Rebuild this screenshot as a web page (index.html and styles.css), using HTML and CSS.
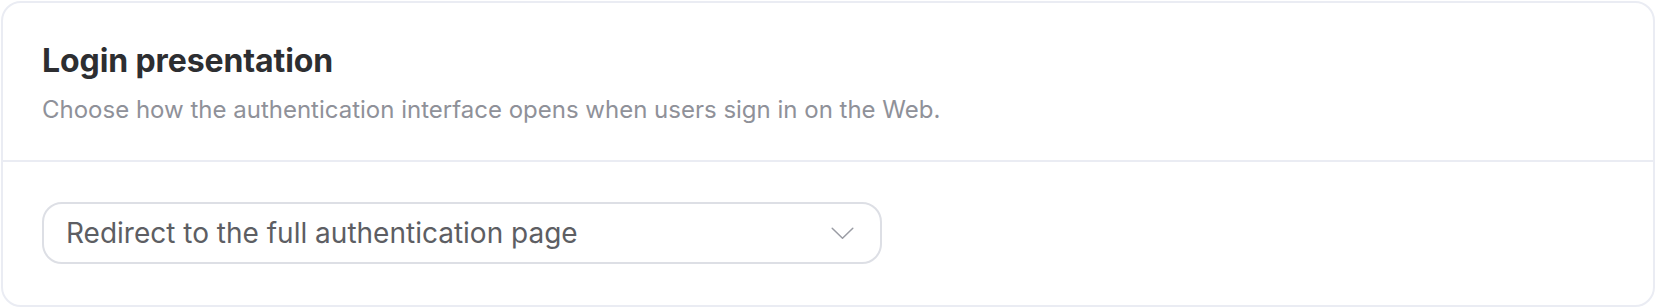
FILE: index.html
```html
<!DOCTYPE html>
<html lang="en">
<head>
<meta charset="utf-8">
<link rel="stylesheet" href="styles.css">
</head>
<body>
<section class="card">
  <header class="card-head">
    <h2 class="title">Login presentation</h2>
    <p class="desc">Choose how the authentication interface opens when users sign in on the Web.</p>
  </header>
  <div class="card-body">
    <div class="select">
      <span class="select-value">Redirect to the full authentication page</span>
      <svg class="chev" width="23" height="13" viewBox="0 0 23 13" fill="none">
        <path d="M1.2 1.2 L11.5 11.2 L21.8 1.2" stroke="#9a9ca4" stroke-width="1.5" stroke-linecap="round" stroke-linejoin="round"/>
      </svg>
    </div>
  </div>
</section>
</body>
</html>
```

FILE: styles.css
```css
* { box-sizing: border-box; }
html, body { margin: 0; padding: 0; background: #ffffff; }
body {
  padding: 1px;
  font-family: Inter, "Noto Sans", sans-serif;
}
.card {
  width: 1654px;
  height: 306px;
  border: 2px solid #eaecf3;
  border-radius: 20px;
  background: #fff;
  display: flex;
  flex-direction: column;
}
.card-head {
  padding: 40px 40px 0 39px;
  height: 159px;
  border-bottom: 2px solid #eaecf3;
}
.title {
  margin: 0;
  font-size: 32px;
  line-height: 36px;
  font-weight: 700;
  color: #2d2e31;
  letter-spacing: -0.1px;
}
.desc {
  margin: 15px 0 0 0;
  font-size: 24px;
  line-height: 32px;
  font-weight: 400;
  color: #8f9199;
}
.card-body {
  padding: 40px 40px 40px 39px;
}
.select {
  width: 840px;
  height: 62px;
  border: 2px solid #dddfe5;
  border-radius: 20px;
  display: flex;
  align-items: center;
  justify-content: space-between;
  padding: 0 26px 0 22px;
}
.select-value {
  font-size: 28px;
  color: #5d5e63;
}
.chev { display: block; }
```
